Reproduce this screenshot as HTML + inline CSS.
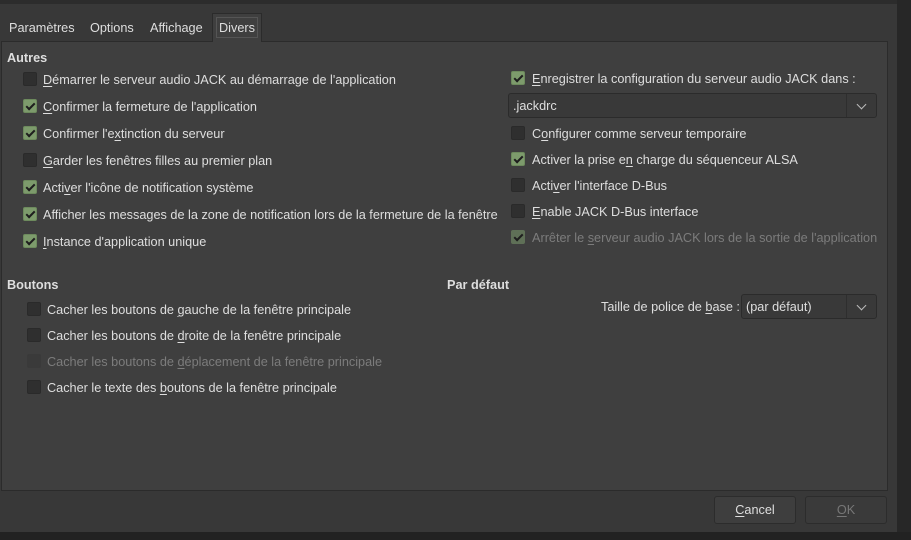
<!DOCTYPE html>
<html><head><meta charset="utf-8"><style>
*{margin:0;padding:0;box-sizing:border-box}
body{width:911px;height:540px;background:#383838;font-family:"Liberation Sans",sans-serif;font-size:12.7px;color:#dedede;position:relative;overflow:hidden}
.a{position:absolute;white-space:nowrap}
.t{margin-top:1px}
.cb{position:absolute;width:14px;height:14px;border-radius:2px;background:#2f2f2f;border:1px solid #2a2a2a}
.cb.on{background:#7d9b6c;border-color:#6d8a5d}
.cb.on::after{content:"";position:absolute;left:4px;top:1px;width:3px;height:7px;border:solid #1e1e1e;border-width:0 2px 2px 0;transform:rotate(45deg)}
.cb.dis{background:#3a3a3a;border-color:#3a3a3a}
.cb.on.dis{background:#5f7057;border-color:#5f7057}
.dis{color:#7c7c7c}
u{text-decoration:underline;text-underline-offset:2px}
.combo{position:absolute;background:#393939;border:1px solid #2b2b2b;border-radius:3px}
.combo .arr{position:absolute;right:0;top:0;bottom:0;width:30px;border-left:1px solid #2e2e2e}
.combo .arr::after{content:"";position:absolute;left:11px;top:7px;width:6px;height:6px;border:solid #bbb;border-width:0 1.5px 1.5px 0;transform:rotate(45deg)}
.btn{position:absolute;height:28px;background:#3e3e3e;border:1px solid #2c2c2c;border-radius:3px;text-align:center;line-height:27px}
b{font-weight:bold}
div.a:not(.cb){padding-top:1px}
</style></head><body>
<div class="a" style="left:0;top:0;width:911px;height:4px;background:#2c2c2c"></div>
<div class="a" style="left:897px;top:0;width:14px;height:540px;background:#272727"></div>
<div class="a" style="left:0;top:532px;width:911px;height:8px;background:#222"></div>
<div class="a" style="left:0;top:4px;width:897px;height:528px;background:#383838"></div>
<div class="a" style="left:1px;top:41px;width:887px;height:450px;background:#3f3f3f;border:1px solid #2b2b2b"></div>
<div class="a" style="left:212px;top:13px;width:50px;height:29px;background:#3f3f3f;border:1px solid #2b2b2b;border-bottom:none"></div>
<div class="a" style="left:216px;top:17px;width:42px;height:21px;border:1px solid #555"></div>
<div class="a" style="left:9px;top:20px">Paramètres</div>
<div class="a" style="left:90px;top:20px">Options</div>
<div class="a" style="left:150px;top:20px">Affichage</div>
<div class="a" style="left:219px;top:20px">Divers</div>

<div class="a" style="left:7px;top:50px"><b>Autres</b></div>
<div class="cb" style="left:23px;top:72px"></div><div class="a" style="left:43px;top:72px"><u>D</u>émarrer le serveur audio JACK au démarrage de l'application</div>
<div class="cb on" style="left:23px;top:99px"></div><div class="a" style="left:43px;top:99px"><u>C</u>onfirmer la fermeture de l'application</div>
<div class="cb on" style="left:23px;top:126px"></div><div class="a" style="left:43px;top:126px">Confirmer l'e<u>x</u>tinction du serveur</div>
<div class="cb" style="left:23px;top:153px"></div><div class="a" style="left:43px;top:153px"><u>G</u>arder les fenêtres filles au premier plan</div>
<div class="cb on" style="left:23px;top:180px"></div><div class="a" style="left:43px;top:180px">Acti<u>v</u>er l'icône de notification système</div>
<div class="cb on" style="left:23px;top:207px"></div><div class="a" style="left:43px;top:207px">Afficher les messages de la zone de notification lors de la fermeture de la fenêtre</div>
<div class="cb on" style="left:23px;top:234px"></div><div class="a" style="left:43px;top:234px"><u>I</u>nstance d'application unique</div>

<div class="cb on" style="left:511px;top:71px"></div><div class="a" style="left:532px;top:71px"><u>E</u>nregistrer la configuration du serveur audio JACK dans :</div>
<div class="combo" style="left:508px;top:93px;width:369px;height:25px"><div class="a" style="left:4px;top:4px">.jackdrc</div><div class="arr"></div></div>
<div class="cb" style="left:511px;top:126px"></div><div class="a" style="left:532px;top:126px">C<u>o</u>nfigurer comme serveur temporaire</div>
<div class="cb on" style="left:511px;top:152px"></div><div class="a" style="left:532px;top:152px">Activer la prise e<u>n</u> charge du séquenceur ALSA</div>
<div class="cb" style="left:511px;top:178px"></div><div class="a" style="left:532px;top:178px">Acti<u>v</u>er l'interface D-Bus</div>
<div class="cb" style="left:511px;top:204px"></div><div class="a" style="left:532px;top:204px"><u>E</u>nable JACK D-Bus interface</div>
<div class="cb on dis" style="left:511px;top:230px"></div><div class="a dis" style="left:532px;top:230px">Arrêter le <u>s</u>erveur audio JACK lors de la sortie de l'application</div>

<div class="a" style="left:7px;top:277px"><b>Boutons</b></div>
<div class="a" style="left:447px;top:277px"><b>Par défaut</b></div>
<div class="cb" style="left:27px;top:302px"></div><div class="a" style="left:47px;top:302px">Cacher les boutons de <u>g</u>auche de la fenêtre principale</div>
<div class="cb" style="left:27px;top:328px"></div><div class="a" style="left:47px;top:328px">Cacher les boutons de <u>d</u>roite de la fenêtre principale</div>
<div class="cb dis" style="left:27px;top:354px"></div><div class="a dis" style="left:47px;top:354px">Cacher les boutons de <u>d</u>éplacement de la fenêtre principale</div>
<div class="cb" style="left:27px;top:380px"></div><div class="a" style="left:47px;top:380px">Cacher le texte des <u>b</u>outons de la fenêtre principale</div>

<div class="a" style="left:601px;top:299px">Taille de police de <u>b</u>ase :</div>
<div class="combo" style="left:741px;top:294px;width:136px;height:25px"><div class="a" style="left:4px;top:4px">(par défaut)</div><div class="arr"></div></div>

<div class="btn" style="left:714px;top:496px;width:82px"><u>C</u>ancel</div>
<div class="btn" style="left:805px;top:496px;width:82px;color:#777;background:#3a3a3a"><u>O</u>K</div>
</body></html>
